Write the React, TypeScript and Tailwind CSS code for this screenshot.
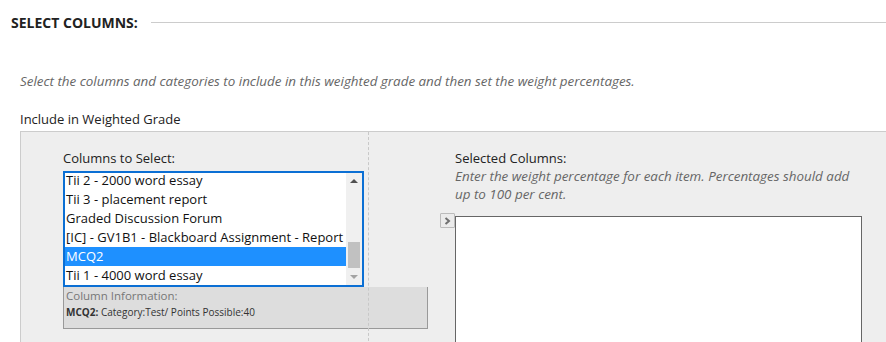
const columns = [
  "Tii 2 - 2000 word essay",
  "Tii 3 - placement report",
  "Graded Discussion Forum",
  "[IC] - GV1B1 - Blackboard Assignment - Report 1",
  "MCQ2",
  "Tii 1 - 4000 word essay",
];

function ColumnList() {
  return (
    <div className="relative h-[116px] w-[301px] overflow-hidden border-2 border-[#0b6fd4] bg-white">
      <div className="-mt-[2px] mr-[16px]">
        {columns.map((c) => (
          <div
            key={c}
            className={`h-[19px] overflow-hidden whitespace-nowrap pl-px text-[13px] leading-[19px] ${
              c === "MCQ2" ? "bg-[#1e90ff] text-white" : "text-[#111]"
            }`}
          >
            {c}
          </div>
        ))}
      </div>
      {/* scrollbar */}
      <div className="absolute right-0 top-0 flex h-full w-[16px] flex-col bg-[#f0f0f0]">
        <div className="flex h-[16px] items-center justify-center">
          <div className="h-0 w-0 border-x-[4px] border-b-[4px] border-x-transparent border-b-[#505050]" />
        </div>
        <div className="relative flex-1">
          <div className="absolute left-[2px] right-[2px] top-[53px] h-[26px] bg-[#c1c1c1]" />
        </div>
        <div className="flex h-[16px] items-center justify-center">
          <div className="h-0 w-0 border-x-[4px] border-t-[4px] border-x-transparent border-t-[#a3a3a3]" />
        </div>
      </div>
    </div>
  );
}

export default function App() {
  return (
    <div className="h-[342px] w-[886px] overflow-hidden bg-white font-['Open_Sans',sans-serif] text-[#222]">
      <div className="flex h-[44px] items-center pl-[11px]">
        <h2 className="text-[14px] font-bold uppercase text-[#222]">Select Columns:</h2>
        <div className="ml-[13px] h-px flex-1 bg-[#cccccc]" />
      </div>

      <p className="mt-[28px] pl-[20px] text-[13.4px] italic leading-[18px] text-[#666]">
        Select the columns and categories to include in this weighted grade and then set the weight percentages.
      </p>

      <div className="mt-[20px] pl-[20px] text-[13px] leading-[18px] text-[#222]">Include in Weighted Grade</div>

      <div className="ml-[20px] mt-[3px] flex h-[220px] border-l border-t border-[#cccccc] bg-[#eeeeee]">
        <div className="w-[347px] shrink-0 pl-[42px] pt-[17px]">
          <div className="pb-[4px] text-[13px] leading-[18px] text-[#222]">Columns to Select:</div>
          <ColumnList />
          <div className="h-[42px] w-[365px] border-x border-b border-[#999] bg-[#dddddd] px-[2px]">
            <div className="text-[11.5px] leading-[17px] text-[#777]">Column Information:</div>
            <div className="text-[10px] leading-[16px] text-[#333]">
              <span className="font-bold">MCQ2:</span> Category:Test/ Points Possible:40
            </div>
          </div>
        </div>

        <div className="flex-1 border-l border-dashed border-[#c8c8c8] pl-[71px] pt-[17px]">
          <div className="pl-[15px]">
            <div className="text-[13px] leading-[18px] text-[#222]">Selected Columns:</div>
            <div className="w-[407px] text-[13.4px] italic leading-[18px] text-[#666]">
              Enter the weight percentage for each item. Percentages should add up to 100 per cent.
            </div>
          </div>
          <div className="mt-[10px] flex items-start">
            <button
              type="button"
              className="flex h-[15px] w-[15px] items-center justify-center rounded-[1px] border border-[#bbbbbb] bg-[#ebebeb]"
            >
              <svg width="7" height="8" viewBox="0 0 7 8">
                <path d="M1.5 1 L5 4 L1.5 7" fill="none" stroke="#707070" strokeWidth="2" />
              </svg>
            </button>
            <div className="mt-[3px] h-[200px] w-[407px] border border-[#666] bg-white" />
          </div>
        </div>
      </div>
    </div>
  );
}
